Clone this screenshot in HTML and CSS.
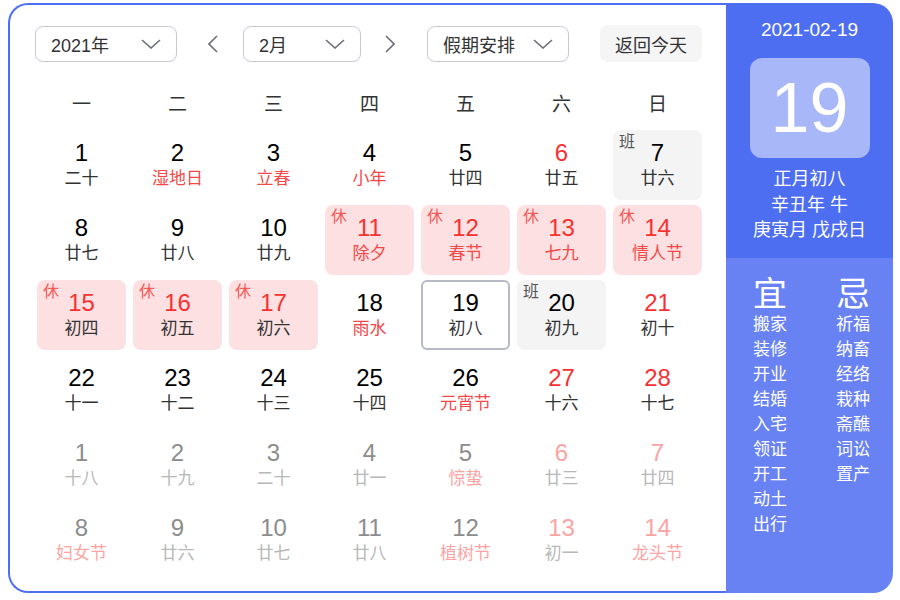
FILE: index.html
```html
<!DOCTYPE html>
<html lang="zh-CN">
<head>
    <meta charset="UTF-8">
    <title>万年历</title>
    <link rel="stylesheet" href="styles.css">
</head>
<body>
<div class="calendar">
    <div class="main">
        <div class="toolbar">
            <div class="select select-year">
                <span>2021年</span>
                <svg class="chevron" width="20" height="10" viewBox="0 0 20 10"><path d="M1 1 L10 9 L19 1" fill="none" stroke="#6b6e76" stroke-width="1.6"/></svg>
            </div>
            <button class="arrow arrow-prev">
                <svg width="10" height="18" viewBox="0 0 10 18"><path d="M9 1 L1 9 L9 17" fill="none" stroke="#6b6e76" stroke-width="1.6"/></svg>
            </button>
            <div class="select select-month">
                <span>2月</span>
                <svg class="chevron" width="20" height="10" viewBox="0 0 20 10"><path d="M1 1 L10 9 L19 1" fill="none" stroke="#6b6e76" stroke-width="1.6"/></svg>
            </div>
            <button class="arrow arrow-next">
                <svg width="10" height="18" viewBox="0 0 10 18"><path d="M1 1 L9 9 L1 17" fill="none" stroke="#6b6e76" stroke-width="1.6"/></svg>
            </button>
            <div class="select select-holiday">
                <span>假期安排</span>
                <svg class="chevron" width="20" height="10" viewBox="0 0 20 10"><path d="M1 1 L10 9 L19 1" fill="none" stroke="#6b6e76" stroke-width="1.6"/></svg>
            </div>
            <button class="today-button">返回今天</button>
        </div>

        <div class="weekdays">
            <span>一</span><span>二</span><span>三</span><span>四</span><span>五</span><span>六</span><span>日</span>
        </div>

        <div class="days">
            <!-- row 1 -->
            <div class="day"><div class="num">1</div><div class="lunar">二十</div></div>
            <div class="day"><div class="num">2</div><div class="lunar red">湿地日</div></div>
            <div class="day"><div class="num">3</div><div class="lunar red">立春</div></div>
            <div class="day"><div class="num">4</div><div class="lunar red">小年</div></div>
            <div class="day"><div class="num">5</div><div class="lunar">廿四</div></div>
            <div class="day"><div class="num red">6</div><div class="lunar">廿五</div></div>
            <div class="day work"><span class="tag">班</span><div class="num">7</div><div class="lunar">廿六</div></div>
            <!-- row 2 -->
            <div class="day"><div class="num">8</div><div class="lunar">廿七</div></div>
            <div class="day"><div class="num">9</div><div class="lunar">廿八</div></div>
            <div class="day"><div class="num">10</div><div class="lunar">廿九</div></div>
            <div class="day rest"><span class="tag">休</span><div class="num red">11</div><div class="lunar red">除夕</div></div>
            <div class="day rest"><span class="tag">休</span><div class="num red">12</div><div class="lunar red">春节</div></div>
            <div class="day rest"><span class="tag">休</span><div class="num red">13</div><div class="lunar red">七九</div></div>
            <div class="day rest"><span class="tag">休</span><div class="num red">14</div><div class="lunar red">情人节</div></div>
            <!-- row 3 -->
            <div class="day rest"><span class="tag">休</span><div class="num red">15</div><div class="lunar">初四</div></div>
            <div class="day rest"><span class="tag">休</span><div class="num red">16</div><div class="lunar">初五</div></div>
            <div class="day rest"><span class="tag">休</span><div class="num red">17</div><div class="lunar">初六</div></div>
            <div class="day"><div class="num">18</div><div class="lunar red">雨水</div></div>
            <div class="day today"><div class="num">19</div><div class="lunar">初八</div></div>
            <div class="day work"><span class="tag">班</span><div class="num">20</div><div class="lunar">初九</div></div>
            <div class="day"><div class="num red">21</div><div class="lunar">初十</div></div>
            <!-- row 4 -->
            <div class="day"><div class="num">22</div><div class="lunar">十一</div></div>
            <div class="day"><div class="num">23</div><div class="lunar">十二</div></div>
            <div class="day"><div class="num">24</div><div class="lunar">十三</div></div>
            <div class="day"><div class="num">25</div><div class="lunar">十四</div></div>
            <div class="day"><div class="num">26</div><div class="lunar red">元宵节</div></div>
            <div class="day"><div class="num red">27</div><div class="lunar">十六</div></div>
            <div class="day"><div class="num red">28</div><div class="lunar">十七</div></div>
            <!-- next month -->
            <div class="day other"><div class="num">1</div><div class="lunar">十八</div></div>
            <div class="day other"><div class="num">2</div><div class="lunar">十九</div></div>
            <div class="day other"><div class="num">3</div><div class="lunar">二十</div></div>
            <div class="day other"><div class="num">4</div><div class="lunar">廿一</div></div>
            <div class="day other"><div class="num">5</div><div class="lunar red">惊蛰</div></div>
            <div class="day other"><div class="num red">6</div><div class="lunar">廿三</div></div>
            <div class="day other"><div class="num red">7</div><div class="lunar">廿四</div></div>
            <div class="day other"><div class="num">8</div><div class="lunar red">妇女节</div></div>
            <div class="day other"><div class="num">9</div><div class="lunar">廿六</div></div>
            <div class="day other"><div class="num">10</div><div class="lunar">廿七</div></div>
            <div class="day other"><div class="num">11</div><div class="lunar">廿八</div></div>
            <div class="day other"><div class="num">12</div><div class="lunar red">植树节</div></div>
            <div class="day other"><div class="num red">13</div><div class="lunar">初一</div></div>
            <div class="day other"><div class="num red">14</div><div class="lunar red">龙头节</div></div>
        </div>
    </div>

    <aside class="side">
        <div class="side-top">
            <div class="side-date">2021-02-19</div>
            <div class="side-day">19</div>
            <div class="side-info">
                <div>正月初八</div>
                <div>辛丑年 牛</div>
                <div>庚寅月 戊戌日</div>
            </div>
        </div>
        <div class="side-bottom">
            <div class="advice">
                <div class="advice-title">宜</div>
                <div>搬家</div>
                <div>装修</div>
                <div>开业</div>
                <div>结婚</div>
                <div>入宅</div>
                <div>领证</div>
                <div>开工</div>
                <div>动土</div>
                <div>出行</div>
            </div>
            <div class="advice">
                <div class="advice-title">忌</div>
                <div>祈福</div>
                <div>纳畜</div>
                <div>经络</div>
                <div>栽种</div>
                <div>斋醮</div>
                <div>词讼</div>
                <div>置产</div>
            </div>
        </div>
    </aside>
</div>
</body>
</html>
```

FILE: styles.css
```css
body {
    margin: 0;
    background-color: #fff;
    font-family: "Liberation Sans", "Noto Sans CJK SC", sans-serif;
    color: #333;
}

.calendar {
    display: flex;
    width: 885px;
    height: 590px;
    margin: 3px 0 0 8px;
}

.main {
    flex: 1;
    border: 2px solid #4e6ef2;
    border-right: none;
    border-radius: 20px 0 0 20px;
    padding: 20px 0 0 25px;
    background-color: #fff;
}

/* toolbar */
.toolbar {
    display: flex;
    align-items: center;
    width: 667px;
    height: 37px;
    margin-bottom: 23px;
}

.select {
    display: flex;
    align-items: center;
    justify-content: space-between;
    box-sizing: border-box;
    height: 36px;
    padding: 0 15px 0 15px;
    border: 1px solid #c7cad3;
    border-radius: 8px;
    font-size: 18px;
    color: #333;
}

.select-year {
    width: 142px;
}

.select-month {
    width: 118px;
}

.select-holiday {
    width: 142px;
}

.arrow {
    display: flex;
    align-items: center;
    justify-content: center;
    width: 20px;
    height: 36px;
    padding: 0;
    border: none;
    background: none;
}

.arrow-prev {
    margin: 0 20px 0 26px;
}

.arrow-next {
    margin: 0 27px 0 19px;
}

.today-button {
    margin-left: auto;
    height: 37px;
    width: 102px;
    padding: 0;
    border: none;
    border-radius: 8px;
    background-color: #f5f5f6;
    font-family: inherit;
    font-size: 18px;
    color: #333;
}

/* grid */
.weekdays {
    display: grid;
    grid-template-columns: repeat(7, 89px);
    column-gap: 7px;
    height: 40px;
    margin: 0 0 5px 2px;
    line-height: 40px;
    text-align: center;
    font-size: 19px;
    color: #333;
}

.days {
    display: grid;
    grid-template-columns: repeat(7, 89px);
    grid-auto-rows: 70px;
    gap: 5px 7px;
    margin-left: 2px;
}

.day {
    position: relative;
    box-sizing: border-box;
    padding-top: 10px;
    border-radius: 8px;
    text-align: center;
}

.num {
    font-size: 24px;
    line-height: 26px;
    color: #000;
}

.lunar {
    margin-top: 3px;
    font-size: 17px;
    line-height: 20px;
    color: #333;
}

.red {
    color: #f73131;
}

.lunar.red {
    color: #f44848;
}

.tag {
    position: absolute;
    top: 3px;
    left: 6px;
    font-size: 16px;
    line-height: 18px;
}

.rest {
    background-color: #fde1e2;
}

.rest .tag {
    color: #f55a5a;
}

.work {
    background-color: #f4f4f5;
}

.work .tag {
    color: #555;
}

.today {
    border: 2px solid #b7bac5;
    border-radius: 6px;
    padding-top: 8px;
}

.other .num {
    color: #8c8c8c;
}

.other .lunar {
    color: #b8b8b8;
}

.other .num.red,
.other .lunar.red {
    color: #fca3a3;
}

/* side panel */
.side {
    display: flex;
    flex-direction: column;
    width: 167px;
    border-radius: 0 20px 20px 0;
    overflow: hidden;
    color: #fff;
}

.side-top {
    height: 255px;
    padding-top: 16px;
    box-sizing: border-box;
    background-color: #4e6ef2;
    text-align: center;
}

.side-date {
    font-size: 19px;
    line-height: 22px;
}

.side-day {
    width: 120px;
    height: 100px;
    margin: 17px auto 9px;
    border-radius: 12px;
    background-color: #a7b7f8;
    font-size: 70px;
    line-height: 100px;
}

.side-info {
    font-size: 18px;
    line-height: 25.5px;
}

.side-bottom {
    flex: 1;
    display: flex;
    padding: 18px 0 0 27px;
    background-color: #6882f3;
}

.advice {
    flex-shrink: 0;
    width: 83px;
    font-size: 17px;
    line-height: 25px;
}

.advice-title {
    font-size: 34px;
    line-height: 36px;
}
```
